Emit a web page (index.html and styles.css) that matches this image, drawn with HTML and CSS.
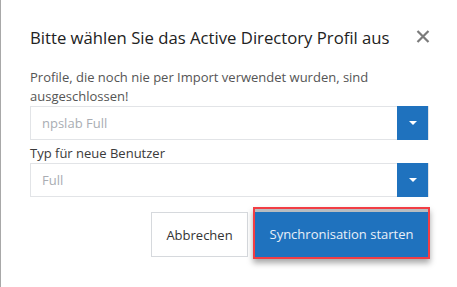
FILE: index.html
```html
<!DOCTYPE html>
<html lang="de">
<head>
<meta charset="utf-8">
<link rel="stylesheet" href="styles.css">
</head>
<body>
<div class="modal">
  <div class="header">
    <h1 class="title">Bitte wählen Sie das Active Directory Profil aus</h1>
    <span class="close">
      <svg width="14" height="13" viewBox="0 0 14 13"><path d="M1.5 1 L12.5 12 M12.5 1 L1.5 12" stroke="#7b7b7b" stroke-width="2.2" fill="none"/></svg>
    </span>
  </div>
  <p class="note">Profile, die noch nie per Import verwendet wurden, sind ausgeschlossen!</p>
  <div class="select">
    <span class="value">npslab Full</span>
    <span class="caret-btn"><span class="caret"></span></span>
  </div>
  <div class="label">Typ für neue Benutzer</div>
  <div class="select select-2">
    <span class="value">Full</span>
    <span class="caret-btn"><span class="caret"></span></span>
  </div>
  <div class="actions">
    <button class="btn btn-cancel">Abbrechen</button>
    <button class="btn btn-primary">Synchronisation starten</button>
  </div>
</div>
</body>
</html>
```

FILE: styles.css
```css
html, body {
  margin: 0;
  padding: 0;
  background: #fff;
}
body {
  font-family: "Open Sans", "Liberation Sans", sans-serif;
  width: 457px;
  height: 287px;
  overflow: hidden;
}
.modal {
  box-sizing: border-box;
  height: 287px;
  border-left: 1px solid #a8a8a8;
  padding: 0 28px 0 29px;
}
.header {
  display: flex;
  justify-content: space-between;
  align-items: flex-start;
  padding-top: 26px;
}
.title {
  margin: 0;
  font-size: 16.7px;
  font-weight: 400;
  line-height: 24px;
  color: #222;
}
.close {
  display: block;
  margin-top: 4px;
  margin-right: -1px;
  line-height: 0;
}
.note {
  margin: 18px 0 0 0;
  font-size: 13px;
  line-height: 19px;
  color: #555;
}
.select {
  display: flex;
  height: 34px;
  box-sizing: border-box;
  border: 1px solid #e2e4e7;
}
.select-2 {
  margin-top: 1px;
}
.value {
  flex: 1;
  padding-left: 11px;
  font-size: 13px;
  line-height: 32px;
  color: #a9adb3;
}
.caret-btn {
  width: 31px;
  background: #1f72be;
  display: flex;
  align-items: center;
  justify-content: center;
  margin: -1px 0;
}
.caret {
  width: 0;
  height: 0;
  border-left: 4px solid transparent;
  border-right: 4px solid transparent;
  border-top: 4px solid #fff;
}
.label {
  margin-top: 4px;
  font-size: 13px;
  line-height: 18px;
  color: #3a3a3a;
}
.actions {
  display: flex;
  justify-content: flex-end;
  align-items: flex-start;
  gap: 5px;
  margin-top: 10px;
  margin-right: -1px;
}
.btn {
  font-family: "Open Sans", "Liberation Sans", sans-serif;
  font-size: 13px;
  cursor: pointer;
}
.btn-cancel {
  width: 97px;
  height: 45px;
  margin-top: 5px;
  background: #fff;
  border: 1.5px solid #d6d9dd;
  color: #333;
  padding: 0;
}
.btn-primary {
  width: 177px;
  height: 52px;
  background: #1f72be;
  color: #e9f0f8;
  border: 2px solid #f23d44;
  box-shadow: inset 0 3px 0 #b8bcc0, 0 4px 6px rgba(0,0,0,0.35);
  padding: 2px 0 0 0;
}
```
